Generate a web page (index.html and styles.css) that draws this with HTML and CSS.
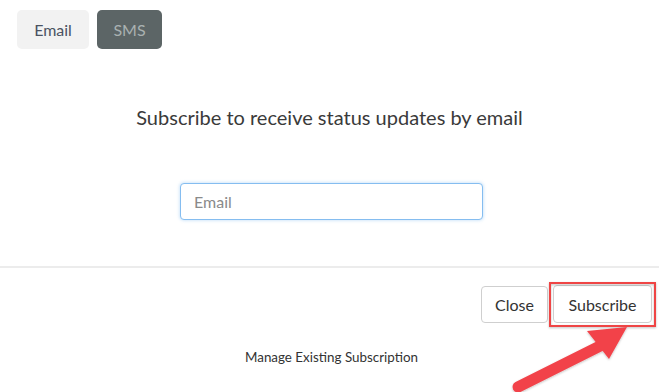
FILE: index.html
```html
<!DOCTYPE html>
<html lang="en">
<head>
  <meta charset="UTF-8" />
  <meta name="viewport" content="width=device-width, initial-scale=1.0"/>
  <title>Subscribe</title>
  <link rel="stylesheet" href="styles.css">
</head>
<body>
  <div class="page">
    <div class="tabs">
      <button class="tab tab-email">Email</button>
      <button class="tab tab-sms">SMS</button>
    </div>

    <h2 class="title">Subscribe to receive status updates by email</h2>

    <div class="input-row">
      <input type="text" class="email-input" placeholder="Email">
    </div>

    <div class="footer">
      <div class="actions">
        <button class="btn btn-close">Close</button>
        <button class="btn btn-subscribe">Subscribe</button>
      </div>
      <div class="manage">Manage Existing Subscription</div>
    </div>

    <svg class="annotation" width="659" height="392" viewBox="0 0 659 392">
      <defs>
        <filter id="shadow" x="-20%" y="-20%" width="140%" height="140%">
          <feDropShadow dx="0" dy="1" stdDeviation="1.2" flood-color="#000" flood-opacity="0.25"/>
        </filter>
      </defs>
      <rect x="550" y="283" width="105" height="43" fill="none" stroke="#ef4444" stroke-width="2" filter="url(#shadow)"/>
      <g filter="url(#shadow)">
        <line x1="518" y1="387" x2="600" y2="346" stroke="#f2434a" stroke-width="11" stroke-linecap="round"/>
        <polygon points="587,331 627,327 609,359" fill="#f2434a"/>
      </g>
    </svg>
  </div>
</body>
</html>
```

FILE: styles.css
```css
body {
  margin: 0;
  font-family: Lato, "Open Sans", Arial, sans-serif;
  background-color: #fff;
  color: #333;
}
.page {
  position: relative;
  width: 659px;
  height: 392px;
  overflow: hidden;
}
.tabs {
  display: flex;
  gap: 8px;
  padding: 10px 17px 0;
}
.tab {
  height: 39px;
  border: none;
  border-radius: 5px;
  font-family: inherit;
  font-size: 16px;
  cursor: pointer;
}
.tab-email {
  width: 72px;
  background-color: #f2f2f2;
  color: #4b5262;
}
.tab-sms {
  width: 65px;
  background-color: #5c6566;
  color: #a9b1b1;
}
.title {
  margin: 56px 0 0;
  text-align: center;
  font-size: 20px;
  line-height: 24px;
  font-weight: normal;
  color: #3a3a3a;
}
.input-row {
  display: flex;
  justify-content: center;
  padding-left: 4px;
  margin-top: 54px;
}
.email-input {
  width: 303px;
  height: 37px;
  box-sizing: border-box;
  padding: 0 13px;
  border: 1px solid #85bdf0;
  border-radius: 4px;
  box-shadow: 0 0 3px 1px rgba(133, 189, 240, 0.35);
  font-family: inherit;
  font-size: 16px;
  color: #333;
  outline: none;
}
.email-input::placeholder {
  color: #8a8a8a;
}
.footer {
  margin-top: 46px;
  border-top: 2px solid #ececec;
}
.actions {
  display: flex;
  justify-content: flex-end;
  align-items: center;
  gap: 5px;
  padding: 17px 7px 0 0;
}
.btn {
  height: 37px;
  padding: 0 12px;
  background-color: #fff;
  border: 1px solid #cfcfcf;
  border-radius: 4px;
  font-family: inherit;
  font-size: 16px;
  color: #333;
  cursor: pointer;
}
.btn-close {
  width: 67px;
}
.btn-subscribe {
  width: 99px;
  height: 38px;
}
.manage {
  margin-top: 26px;
  text-align: center;
  font-size: 13.4px;
  line-height: 16px;
  color: #333;
  padding-left: 4px;
}
.annotation {
  position: absolute;
  top: 0;
  left: 0;
  pointer-events: none;
}
```
